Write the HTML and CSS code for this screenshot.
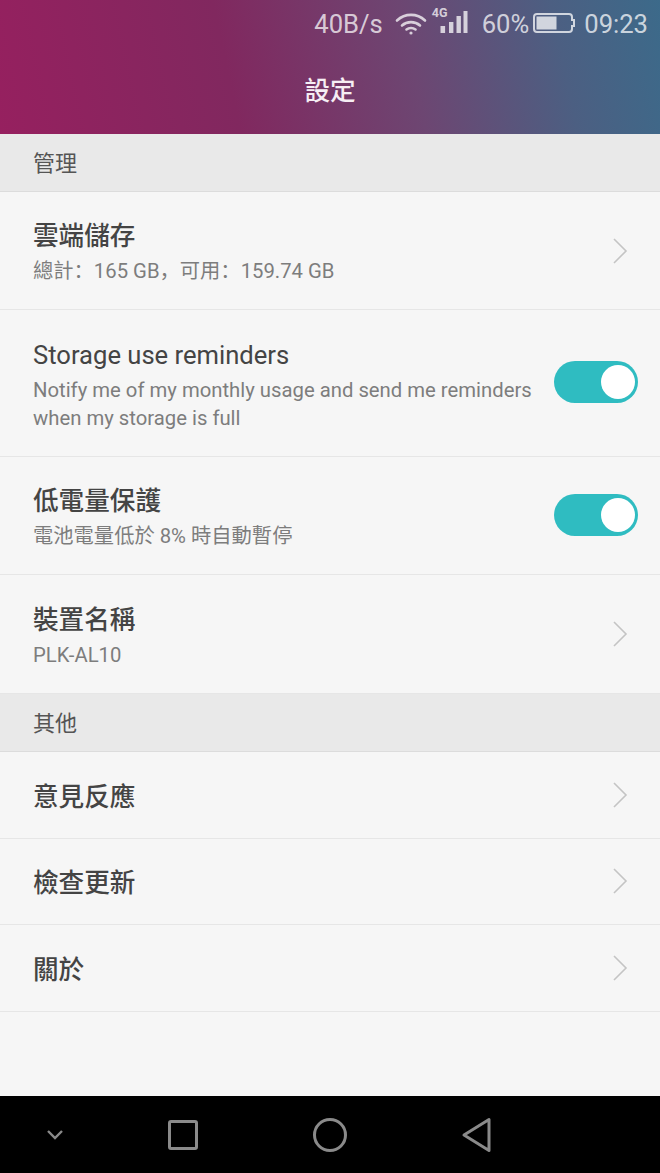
FILE: index.html
```html
<!DOCTYPE html>
<html lang="zh">

<head>
    <meta charset="UTF-8" />
    <meta name="viewport" content="width=device-width, initial-scale=1.0" />
    <title>設定</title>
    <link rel="stylesheet" href="styles.css">
</head>

<body>
    <header class="appbar">
        <div class="statusbar">
            <span class="speed">40B/s</span>
            <svg class="wifi" width="32" height="24" viewBox="0 0 32 24" fill="none" stroke="currentColor" stroke-width="2.6" stroke-linecap="round">
                <path d="M2 9.5C10 2 22 2 30 9.5" />
                <path d="M7 14.5C12 10 20 10 25 14.5" />
                <path d="M11.5 18.5C14 16.7 18 16.7 20.5 18.5" />
                <circle cx="16" cy="22" r="1.6" fill="currentColor" stroke="none" />
            </svg>
            <span class="signal">
                <span class="net">4G</span>
                <svg width="28" height="22" viewBox="0 0 28 22" fill="currentColor">
                    <rect x="0.5" y="15" width="4.6" height="7" />
                    <rect x="9" y="11" width="4.4" height="11" />
                    <rect x="16.5" y="5" width="4.4" height="17" />
                    <rect x="23.5" y="0" width="4" height="22" />
                </svg>
            </span>
            <span class="pct">60%</span>
            <svg class="battery" width="42" height="22" viewBox="0 0 42 22" fill="none">
                <path d="M4 2H36Q39 2 39 5V8H41V14H39V17Q39 20 36 20H4Q1 20 1 17V5Q1 2 4 2Z" stroke="currentColor" stroke-width="2" />
                <rect x="3.5" y="4.5" width="20" height="13" fill="currentColor" />
            </svg>
            <span class="clock">09:23</span>
        </div>
        <h1 class="title">設定</h1>
    </header>

    <main class="content">
        <h2 class="section">管理</h2>

        <div class="row">
            <div class="text">
                <div class="name name-cjk">雲端儲存</div>
                <div class="desc">總計&#xFF1A;165 GB&#xFF0C;可用&#xFF1A;159.74 GB</div>
            </div>
            <svg class="chevron" width="16" height="28" viewBox="0 0 16 28" fill="none" stroke="#c4c4c4" stroke-width="1.6">
                <path d="M2 2L14 14L2 26" />
            </svg>
        </div>

        <div class="row">
            <div class="text">
                <div class="name">Storage use reminders</div>
                <div class="desc">Notify me of my monthly usage and send me reminders when my storage is full</div>
            </div>
            <span class="toggle"><span class="knob"></span></span>
        </div>

        <div class="row">
            <div class="text">
                <div class="name name-cjk">低電量保護</div>
                <div class="desc">電池電量低於 8% 時自動暫停</div>
            </div>
            <span class="toggle"><span class="knob"></span></span>
        </div>

        <div class="row">
            <div class="text">
                <div class="name name-cjk">裝置名稱</div>
                <div class="desc">PLK-AL10</div>
            </div>
            <svg class="chevron" width="16" height="28" viewBox="0 0 16 28" fill="none" stroke="#c4c4c4" stroke-width="1.6">
                <path d="M2 2L14 14L2 26" />
            </svg>
        </div>

        <h2 class="section">其他</h2>

        <div class="row row-short">
            <div class="text">
                <div class="name name-cjk">意見反應</div>
            </div>
            <svg class="chevron" width="16" height="28" viewBox="0 0 16 28" fill="none" stroke="#c4c4c4" stroke-width="1.6">
                <path d="M2 2L14 14L2 26" />
            </svg>
        </div>

        <div class="row row-short">
            <div class="text">
                <div class="name name-cjk">檢查更新</div>
            </div>
            <svg class="chevron" width="16" height="28" viewBox="0 0 16 28" fill="none" stroke="#c4c4c4" stroke-width="1.6">
                <path d="M2 2L14 14L2 26" />
            </svg>
        </div>

        <div class="row row-short">
            <div class="text">
                <div class="name name-cjk">關於</div>
            </div>
            <svg class="chevron" width="16" height="28" viewBox="0 0 16 28" fill="none" stroke="#c4c4c4" stroke-width="1.6">
                <path d="M2 2L14 14L2 26" />
            </svg>
        </div>
    </main>

    <nav class="navbar">
        <svg class="nav-down" width="20" height="14" viewBox="0 0 20 14" fill="none" stroke="#8a8a8a" stroke-width="2.4">
            <path d="M3 3L10 10L17 3" />
        </svg>
        <svg class="nav-square" width="30" height="30" viewBox="0 0 30 30" fill="none" stroke="#8a8a8a" stroke-width="3">
            <rect x="1.5" y="1.5" width="27" height="27" rx="1.5" />
        </svg>
        <svg class="nav-circle" width="36" height="36" viewBox="0 0 36 36" fill="none" stroke="#8a8a8a" stroke-width="3">
            <circle cx="18" cy="18" r="15.5" />
        </svg>
        <svg class="nav-back" width="32" height="36" viewBox="0 0 32 36" fill="none" stroke="#8a8a8a" stroke-width="3" stroke-linejoin="round">
            <path d="M28 2.5V33.5L3 18Z" />
        </svg>
    </nav>
</body>

</html>
```

FILE: styles.css
```css
* {
    box-sizing: border-box;
}

body {
    margin: 0;
    height: 1173px;
    display: flex;
    flex-direction: column;
    overflow: hidden;
    font-family: Roboto, "Noto Sans CJK SC", sans-serif;
    background-color: #f6f6f6;
    color: #444;
}

.appbar {
    height: 134px;
    flex: none;
    background: linear-gradient(78deg, #96205f 0%, #81285f 35%, #6d4672 62%, #4c5f82 84%, #3c6a8a 100%);
    color: rgba(255, 255, 255, 0.74);
}

.statusbar {
    height: 48px;
    display: flex;
    align-items: center;
    justify-content: flex-end;
    padding-right: 12px;
    font-size: 25.6px;
}

.speed {
    margin-right: 12px;
}

.wifi {
    margin: 0 13px 3px 0;
}

.signal {
    position: relative;
    display: flex;
    margin: 0 14px 4px 0;
}

.net {
    position: absolute;
    top: -4px;
    left: -8px;
    font-size: 12.5px;
    font-weight: 700;
    line-height: 12px;
}

.battery {
    margin: 0 9px 2px 4px;
}

.title {
    margin: 10px 0 0;
    font-size: 25.6px;
    font-weight: 500;
    line-height: 66px;
    text-align: center;
    color: #f6eef4;
}

.content {
    flex: 1;
}

.section {
    height: 58px;
    margin: 0;
    padding: 1px 0 0 33px;
    font-size: 22px;
    font-weight: 400;
    line-height: 58px;
    color: #555;
    background-color: #e9e9e9;
    border-bottom: 1px solid #dcdcdc;
}

.row {
    display: flex;
    align-items: center;
    justify-content: space-between;
    padding: 0 22px 0 33px;
    border-bottom: 1px solid #e6e6e6;
}

.row-short {
    height: 86.67px;
}

.text {
    width: 510px;
    padding: 27.4px 0 24.1px;
}

.row-short .text {
    padding: 4px 0 0;
}

.name {
    font-size: 25.6px;
    line-height: 34px;
}

.name-cjk {
    font-weight: 500;
}

.desc {
    margin-top: 4px;
    font-size: 20.3px;
    line-height: 28px;
    color: #7d7d7d;
}

.chevron {
    margin-right: 10px;
}

.toggle {
    width: 84px;
    height: 42px;
    flex: none;
    display: flex;
    justify-content: flex-end;
    align-items: center;
    margin-bottom: 2px;
    padding-right: 3px;
    border-radius: 21px;
    background-color: #2fbcc1;
}

.knob {
    width: 34px;
    height: 34px;
    border-radius: 50%;
    background-color: #fff;
}

.navbar {
    height: 77px;
    flex: none;
    display: flex;
    align-items: center;
    background-color: #000;
    padding-left: 45px;
}

.nav-square {
    margin-left: 103px;
}

.nav-circle {
    margin-left: 114px;
}

.nav-back {
    margin-left: 113px;
}
```
